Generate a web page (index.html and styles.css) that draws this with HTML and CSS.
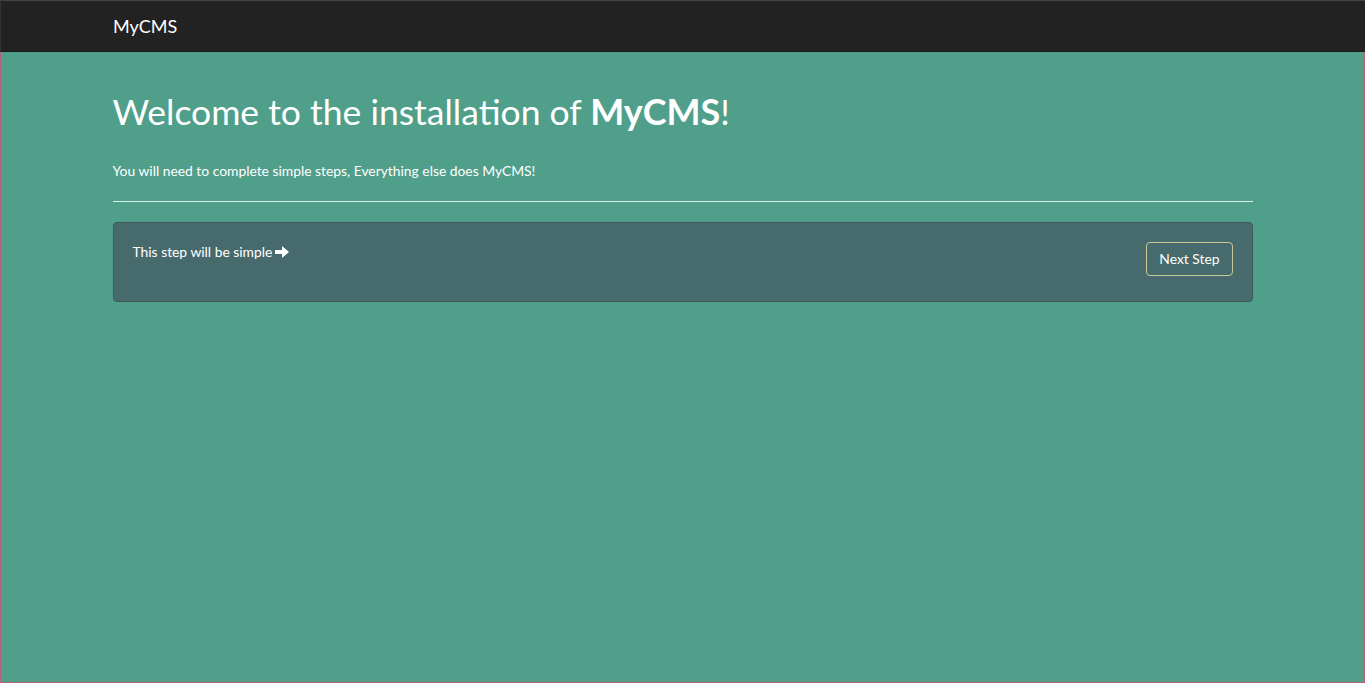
FILE: index.html
```html
<!DOCTYPE html>
<html lang="en">
<head>
<meta charset="utf-8">
<title>MyCMS Installation</title>
<link rel="stylesheet" href="styles.css">
</head>
<body>
<div class="page">
  <nav class="navbar">
    <div class="container">
      <span class="brand">MyCMS</span>
    </div>
  </nav>
  <main class="container">
    <h1 class="title">Welcome to the installation of <strong>MyCMS</strong>!</h1>
    <p class="lead">You will need to complete simple steps, Everything else does MyCMS!</p>
    <hr class="divider">
    <div class="panel">
      <div class="panel-text">This step will be simple <svg class="arrow" viewBox="0 0 14 12" width="14" height="12" aria-hidden="true"><path d="M0 4 H7 V0 L14 6 L7 12 V8 H0 Z" fill="#fff"/></svg></div>
      <button class="btn" type="button">Next Step</button>
    </div>
  </main>
</div>
</body>
</html>
```

FILE: styles.css
```css
* { box-sizing: border-box; }
html, body { margin: 0; padding: 0; height: 100%; }
body {
  font-family: Lato, "Open Sans", sans-serif;
  font-size: 14px;
  line-height: 20px;
  color: #fff;
  background: #509f8a;
}
.page {
  min-height: 100%;
  height: 683px;
  border: 1px solid #b5607a;
  border-top: none;
  background: #509f8a;
}
.container {
  width: 1140px;
  margin: 0 auto;
}
.navbar {
  height: 52px;
  margin: 0 -1px;
  background: #222;
  border-top: 1px solid #444;
  border-left: 1px solid #333;
  border-bottom: 1px solid #1a1a1a;
}
.navbar .container {
  display: flex;
  align-items: center;
  height: 50px;
}
.brand {
  font-size: 18px;
  line-height: 20px;
  color: #fff;
}
.title {
  margin: 37px 0 0;
  font-size: 35.5px;
  line-height: 44px;
  font-weight: 400;
}
.title strong { font-weight: 700; font-size: 36px; }
.lead {
  margin: 27px 0 0;
  font-size: 13.85px;
  line-height: 20px;
}
.divider {
  margin: 20px 0 20px;
  border: 0;
  border-top: 1px solid #d8efe4;
  height: 0;
}
.panel {
  display: flex;
  justify-content: space-between;
  align-items: flex-start;
  min-height: 80px;
  padding: 19px 19px;
  background: #476b6d;
  border: 1px solid #3a5a5b;
  border-radius: 4px;
}
.panel-text {
  display: flex;
  align-items: center;
  gap: 3px;
  line-height: 20px;
  font-size: 13.85px;
}
.arrow { margin-top: -1px; }
.btn {
  font-family: inherit;
  font-size: 13.85px;
  line-height: 20px;
  color: #fff;
  background: transparent;
  border: 1px solid #c9c794;
  border-radius: 4px;
  padding: 6px 12px;
  cursor: pointer;
}
```
